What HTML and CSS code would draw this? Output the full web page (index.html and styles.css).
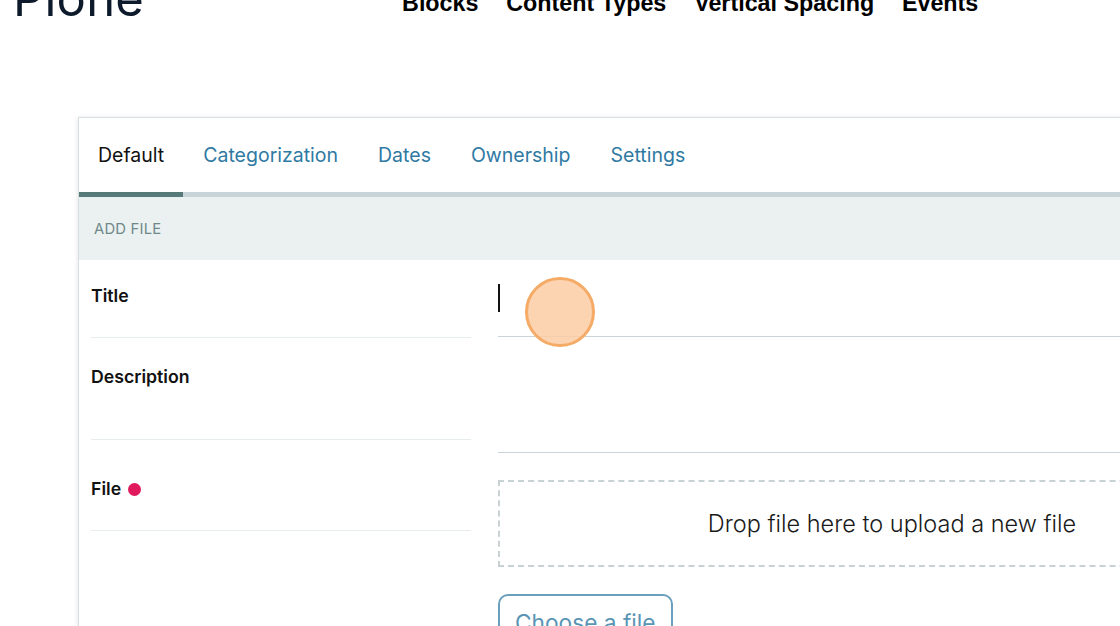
FILE: index.html
```html
<!DOCTYPE html>
<html lang="en">
<head>
<meta charset="utf-8">
<title>Add File</title>
<link rel="stylesheet" href="styles.css">
</head>
<body>
<header class="site-header">
  <div class="logo">Plone</div>
  <nav class="main-nav">
    <a href="#">Blocks</a>
    <a href="#">Content Types</a>
    <a href="#">Vertical Spacing</a>
    <a href="#">Events</a>
  </nav>
</header>

<main class="card">
  <div class="tabs">
    <a class="tab active" href="#">Default</a>
    <a class="tab" href="#">Categorization</a>
    <a class="tab" href="#">Dates</a>
    <a class="tab" href="#">Ownership</a>
    <a class="tab" href="#">Settings</a>
  </div>
  <div class="band">ADD FILE</div>

  <div class="row row-title">
    <div class="label-cell"><span class="label">Title</span></div>
    <div class="field-cell">
      <div class="text-input"><span class="caret"></span></div>
    </div>
  </div>

  <div class="row row-desc">
    <div class="label-cell"><span class="label">Description</span></div>
    <div class="field-cell">
      <div class="textarea"></div>
    </div>
  </div>

  <div class="row row-file">
    <div class="label-cell"><span class="label">File</span><span class="required"></span></div>
    <div class="field-cell">
      <div class="dropzone">Drop file here to upload a new file</div>
      <button class="choose" type="button">Choose a file</button>
    </div>
  </div>
</main>

<div class="click-marker"></div>
</body>
</html>
```

FILE: styles.css
```css
html, body {
  margin: 0;
  padding: 0;
  overflow: hidden;
  background: #fff;
}
body {
  width: 1120px;
  height: 626px;
  position: relative;
  font-family: Inter, "Noto Sans", sans-serif;
  color: #111;
}

.site-header {
  display: flex;
  align-items: flex-start;
  height: 117px;
}
.logo {
  font-family: Inter, sans-serif;
  font-size: 49px;
  line-height: 48px;
  color: #0d1a2b;
  margin-top: -25px;
  margin-left: 13px;
  letter-spacing: 0.2px;
}
.main-nav {
  display: flex;
  gap: 27.8px;
  margin-left: 258px;
  margin-top: -10px;
}
.main-nav a {
  font-family: "Liberation Sans", Arial, sans-serif;
  font-weight: bold;
  font-size: 23.3px;
  line-height: 26px;
  color: #000;
  text-decoration: none;
}

.card {
  margin-left: 78px;
  width: 1220px;
  height: 600px;
  border: 1px solid #d6e0e3;
  box-shadow: 0 1px 5px rgba(0, 0, 0, 0.12);
  background: #fff;
}

.tabs {
  display: flex;
  height: 74px;
  border-bottom: 5px solid #c8d4d8;
}
.tab {
  display: flex;
  align-items: center;
  padding: 0 20px;
  font-size: 19.5px;
  color: #2f7aa3;
  text-decoration: none;
}
.tab.active {
  color: #111;
  border-bottom: 5px solid #577a79;
  margin-bottom: -5px;
  padding-left: 19px;
  padding-right: 19px;
}

.band {
  height: 63px;
  background: #ebf1f1;
  display: flex;
  align-items: center;
  padding-left: 15px;
  font-size: 14.8px;
  color: #6f8888;
  letter-spacing: 0.2px;
}

.row {
  display: grid;
  grid-template-columns: 380px 788px;
  column-gap: 27px;
  padding-left: 12px;
  align-items: start;
}
.label-cell {
  border-bottom: 1px solid #e7edee;
  display: flex;
  align-items: flex-start;
  gap: 7px;
}
.label {
  font-size: 17.7px;
  font-weight: 600;
  line-height: 20px;
  color: #111;
}
.required {
  width: 13px;
  height: 13px;
  margin-top: 4px;
  border-radius: 50%;
  background: #e0185c;
}

.row-title .label-cell {
  padding-top: 26px;
  height: 51px;
}
.text-input {
  border-bottom: 1px solid #c9d4d8;
  padding-top: 24px;
  box-sizing: border-box;
  height: 77px;
}
.caret {
  display: block;
  width: 2px;
  height: 28px;
  background: #111;
}

.row-desc .label-cell {
  padding-top: 29px;
  height: 72px;
}
.textarea {
  height: 114px;
  border-bottom: 1px solid #c9d4d8;
}

.row-file .label-cell {
  padding-top: 26px;
  height: 51px;
}
.dropzone {
  margin-top: 27px;
  height: 87px;
  box-sizing: border-box;
  border: 2px dashed #c8d2d5;
  display: flex;
  align-items: center;
  justify-content: center;
  font-size: 23.5px;
  font-weight: 300;
  color: #1a1a1a;
}
.choose {
  margin-top: 27px;
  height: 52px;
  padding: 13px 15px 0 15px;
  border: 2px solid #6aa0bd;
  border-radius: 10px;
  background: #fff;
  font-family: Inter, sans-serif;
  font-size: 22.7px;
  color: #5a95b5;
  display: flex;
  align-items: flex-start;
}

.click-marker {
  position: absolute;
  left: 525px;
  top: 277px;
  width: 64px;
  height: 64px;
  border-radius: 50%;
  background: rgba(252, 204, 163, 0.85);
  border: 3px solid #f5ab66;
}
```
